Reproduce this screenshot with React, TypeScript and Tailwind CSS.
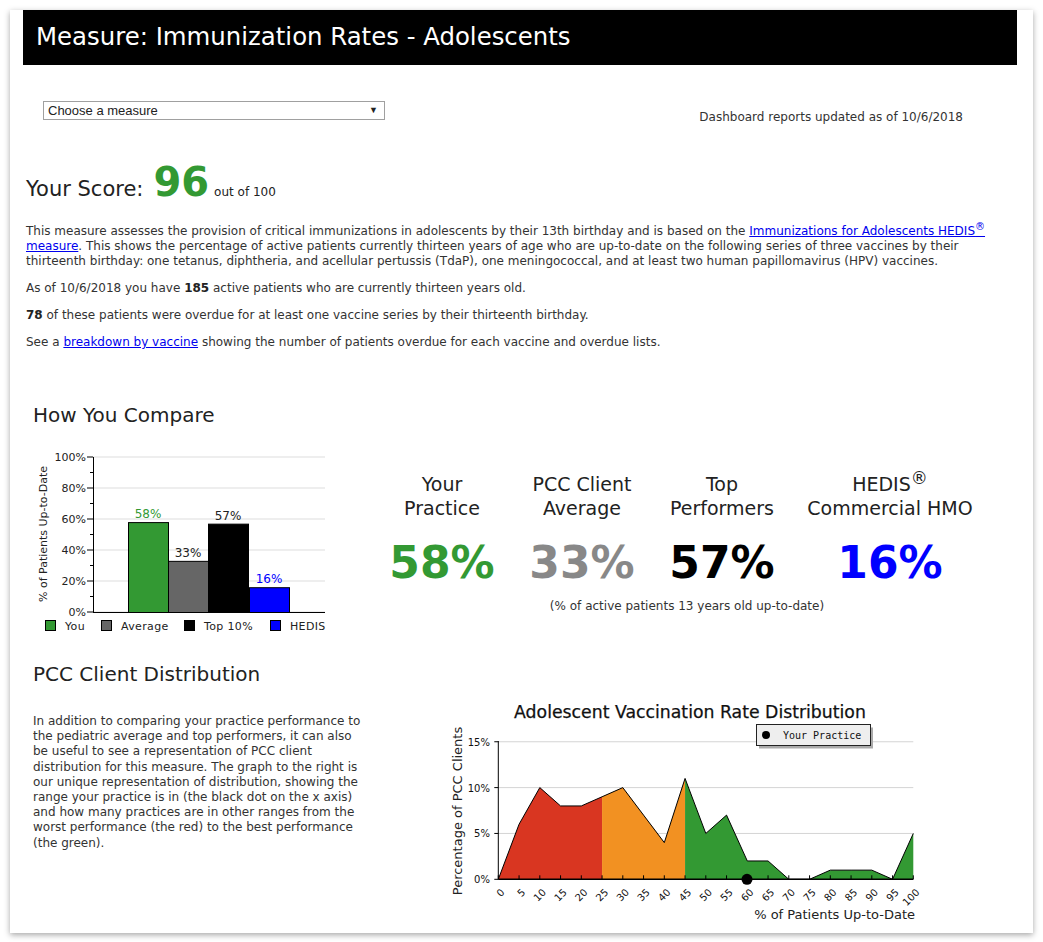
import React from "react";

const GREEN = "#339933";
const BLUE = "#0000ff";

const distValues = [0, 6, 10, 8, 8, 9, 10, 7, 4, 11, 5, 7, 2, 2, 0, 0, 1, 1, 1, 0, 5];

const CompareChart = () => {
    const y0 = 166;
    const scale = 1.55;
    const gridYs = [0, 20, 40, 60, 80, 100];
    const bars = [
        { x: 98, v: 58, fill: GREEN, label: "58%", color: GREEN },
        { x: 138, v: 33, fill: "#666666", label: "33%", color: "#222" },
        { x: 178, v: 57, fill: "#000000", label: "57%", color: "#222" },
        { x: 219, v: 16, fill: BLUE, label: "16%", color: BLUE },
    ];
    const legend = [
        { x: 15, fill: GREEN, label: "You" },
        { x: 71, fill: "#666666", label: "Average" },
        { x: 154, fill: "#000000", label: "Top 10%" },
        { x: 240, fill: BLUE, label: "HEDIS" },
    ];
    return (
        <svg width="300" height="190" className="shrink-0" style={{ fontFamily: '"DejaVu Sans", Verdana, sans-serif' }}>
            {gridYs.map((g) => (
                <line key={g} x1="63" x2="295" y1={y0 - g * scale} y2={y0 - g * scale} stroke="#dddddd" />
            ))}
            {[10, 30, 50, 70, 90].map((g) => (
                <line key={g} x1="60" x2="63" y1={y0 - g * scale} y2={y0 - g * scale} stroke="#000" />
            ))}
            {gridYs.map((g) => (
                <g key={"t" + g}>
                    <line x1="57" x2="63" y1={y0 - g * scale} y2={y0 - g * scale} stroke="#000" />
                    <text x="56" y={y0 - g * scale + 4} textAnchor="end" fontSize="11" fill="#222">
                        {g}%
                    </text>
                </g>
            ))}
            <line x1="63.5" x2="63.5" y1="11" y2={y0} stroke="#000" />
            <line x1="63" x2="295" y1={y0 + 0.5} y2={y0 + 0.5} stroke="#000" />
            {bars.map((b) => (
                <g key={b.label}>
                    <rect x={b.x + 0.5} y={y0 - b.v * scale + 0.5} width="40" height={b.v * scale} fill={b.fill} stroke="#000" />
                    <text x={b.x + 20} y={y0 - b.v * scale - 4} textAnchor="middle" fontSize="12" fill={b.color}>
                        {b.label}
                    </text>
                </g>
            ))}
            <text transform="translate(17 88) rotate(-90)" textAnchor="middle" fontSize="11" fill="#222">
                % of Patients Up-to-Date
            </text>
            {legend.map((l) => (
                <g key={l.label}>
                    <rect x={l.x + 0.5} y="174.5" width="10" height="10" fill={l.fill} stroke="#000" />
                    <text x={l.x + 20} y="184" fontSize="11" fill="#222" letterSpacing="0.35">
                        {l.label}
                    </text>
                </g>
            ))}
        </svg>
    );
};

const DistributionChart = () => {
    const x0 = 58.3;
    const step = 20.75;
    const y0 = 188.3;
    const unit = 9.17;
    const pts = distValues.map((v, i) => [x0 + i * step, y0 - v * unit]);
    const area = (from: number, to: number) => {
        const seg = pts.slice(from, to + 1).map((p) => `${p[0]},${p[1]}`);
        return [`${pts[from][0]},${y0}`, ...seg, `${pts[to][0]},${y0}`].join(" ");
    };
    const line = pts.map((p) => `${p[0]},${p[1]}`).join(" ");
    return (
        <svg width="490" height="240" style={{ fontFamily: '"DejaVu Sans", Verdana, sans-serif' }}>
            <text x="250" y="27" textAnchor="middle" fontSize="17.3" fill="#111" stroke="#111" strokeWidth="0.25">
                Adolescent Vaccination Rate Distribution
            </text>
            {[5, 10, 15].map((g) => (
                <line key={g} x1={x0} x2="473.3" y1={y0 - g * unit} y2={y0 - g * unit} stroke="#d4d4d4" />
            ))}
            <polygon points={area(0, 5)} fill="#d93621" />
            <polygon points={area(5, 9)} fill="#f29122" />
            <polygon points={area(9, 20)} fill={GREEN} />
            <polyline points={line} fill="none" stroke="#000" strokeWidth="1" />
            <line x1={x0} x2={x0} y1="50" y2={y0} stroke="#000" />
            <line x1={x0} x2="473.3" y1={y0} y2={y0} stroke="#000" strokeWidth="1.5" />
            {[0, 5, 10, 15].map((g) => (
                <g key={"y" + g}>
                    <line x1={x0 - 4} x2={x0} y1={y0 - g * unit} y2={y0 - g * unit} stroke="#000" />
                    <text x="50" y={y0 - g * unit + 4} textAnchor="end" fontSize="10" fill="#111">
                        {g}%
                    </text>
                </g>
            ))}
            {pts.map((p, i) => (
                <g key={"x" + i}>
                    <line x1={p[0]} x2={p[0]} y1={y0 - 4} y2={y0} stroke="#000" />
                    <text
                        transform={`translate(${p[0] + 7} 202) rotate(-45)`}
                        textAnchor="end"
                        fontSize="10"
                        fill="#111"
                    >
                        {i * 5}
                    </text>
                </g>
            ))}
            <circle cx="307" cy={y0} r="5.5" fill="#000" />
            <text transform="translate(22 120) rotate(-90)" textAnchor="middle" fontSize="13" fill="#222">
                Percentage of PCC Clients
            </text>
            <text x="475" y="228" textAnchor="end" fontSize="13" fill="#222">
                % of Patients Up-to-Date
            </text>
            <rect x="319" y="36.5" width="114" height="21" fill="#aaaaaa" />
            <rect x="316.5" y="33.5" width="114" height="21" fill="#eeeeee" stroke="#222" />
            <circle cx="326" cy="44" r="4" fill="#000" />
            <text x="343" y="48" fontSize="10" fill="#111" style={{ fontFamily: '"DejaVu Sans Mono", monospace' }}>
                Your Practice
            </text>
        </svg>
    );
};

const Stat = ({ label, value, color, wide }: { label: React.ReactNode; value: string; color: string; wide?: boolean }) => (
    <div className={`flex flex-col items-center ${wide ? "w-[196px]" : "w-[140px]"}`}>
        <div className="text-[19px] leading-[24px] text-[#222] text-center">{label}</div>
        <div className="mt-[21px] text-[44px] leading-none font-bold" style={{ color }}>
            {value}
        </div>
    </div>
);

export default function App() {
    return (
        <div className="bg-white min-h-screen p-[10px] font-['DejaVu_Sans',Verdana,sans-serif] text-[#333]">
            <div className="shadow-[0_2px_6px_rgba(0,0,0,0.35)] pl-[13px] pr-[16px] pb-[2px]">
                {/* header */}
                <div className="bg-black h-[55px] flex items-center px-[13px]">
                    <h1 className="text-white text-[24.4px] leading-none">Measure: Immunization Rates - Adolescents</h1>
                </div>

                <div className="pl-[3px]">
                    {/* measure select + update date */}
                    <div className="mt-[36px] flex items-start">
                        <div className="ml-[17px] w-[342px] h-[19px] border border-[#a0a0a0] bg-white flex items-center justify-between pl-[4px] pr-[6px] font-['Liberation_Sans',Arial,sans-serif] text-[13px] text-[#222]">
                            <span>Choose a measure</span>
                            <span className="text-[9px]">▼</span>
                        </div>
                        <div className="ml-auto mr-[54px] mt-[9px] text-[12px] leading-[15px]">Dashboard reports updated as of 10/6/2018</div>
                    </div>

                    {/* score */}
                    <div className="mt-[37px] flex items-baseline h-[40px]">
                        <span className="text-[21px] text-[#222] mr-[10px]">Your Score:</span>
                        <span className="text-[40px] leading-none font-bold text-[#339933] mr-[5px]">96</span>
                        <span className="text-[12px] text-[#222]">out of 100</span>
                    </div>

                    {/* description */}
                    <div className="mt-[22px] text-[12px] leading-[15px] w-[975px]">
                        <p className="mb-[12px]">
                            This measure assesses the provision of critical immunizations in adolescents by their 13th birthday and is based on the{" "}
                            <a href="#" className="text-[#0000ee] underline">
                                Immunizations for Adolescents HEDIS<sup className="text-[10px]">®</sup>
                            </a>
                            <br />
                            <a href="#" className="text-[#0000ee] underline">
                                measure
                            </a>
                            . This shows the percentage of active patients currently thirteen years of age who are up-to-date on the following series of
                            three vaccines by their
                            <br />
                            thirteenth birthday: one tetanus, diphtheria, and acellular pertussis (TdaP), one meningococcal, and at least two human
                            papillomavirus (HPV) vaccines.
                        </p>
                        <p className="mb-[12px]">
                            As of 10/6/2018 you have <b className="text-[#222]">185</b> active patients who are currently thirteen years old.
                        </p>
                        <p className="mb-[12px]">
                            <b className="text-[#222]">78</b> of these patients were overdue for at least one vaccine series by their thirteenth birthday.
                        </p>
                        <p>
                            See a{" "}
                            <a href="#" className="text-[#0000ee] underline">
                                breakdown by vaccine
                            </a>{" "}
                            showing the number of patients overdue for each vaccine and overdue lists.
                        </p>
                    </div>

                    {/* how you compare */}
                    <h2 className="mt-[53px] ml-[7px] text-[20px] leading-[24px] text-[#222]">How You Compare</h2>
                    <div className="mt-[19px] flex items-start">
                        <div className="ml-[4px]">
                            <CompareChart />
                        </div>
                        <div className="ml-[42px] mt-[26px] flex flex-col">
                            <div className="flex">
                                <Stat label={<>Your<br />Practice</>} value="58%" color={GREEN} />
                                <Stat label={<>PCC Client<br />Average</>} value="33%" color="#888888" />
                                <Stat label={<>Top<br />Performers</>} value="57%" color="#000000" />
                                <Stat
                                    wide
                                    label={
                                        <>
                                            HEDIS<sup className="text-[17px] top-[-7px]">®</sup>
                                            <br />
                                            Commercial HMO
                                        </>
                                    }
                                    value="16%"
                                    color={BLUE}
                                />
                            </div>
                            <div className="mt-[14px] pl-[14px] text-center text-[12px] leading-[15px] text-[#333]">
                                (% of active patients 13 years old up-to-date)
                            </div>
                        </div>
                    </div>

                    {/* distribution */}
                    <div className="mt-[26px] flex items-start">
                        <div className="w-[414px] pl-[7px] shrink-0">
                            <h2 className="text-[20px] leading-[24px] text-[#222]">PCC Client Distribution</h2>
                            <p className="mt-[28px] w-[332px] text-[12px] leading-[15.2px]">
                                In addition to comparing your practice performance to the pediatric average and top performers, it can also be useful to see
                                a representation of PCC client distribution for this measure. The graph to the right is our unique representation of
                                distribution, showing the range your practice is in (the black dot on the x axis) and how many practices are in other ranges
                                from the worst performance (the red) to the best performance (the green).
                            </p>
                        </div>
                        <div className="mt-[29px]">
                            <DistributionChart />
                        </div>
                    </div>
                </div>
            </div>
        </div>
    );
}
